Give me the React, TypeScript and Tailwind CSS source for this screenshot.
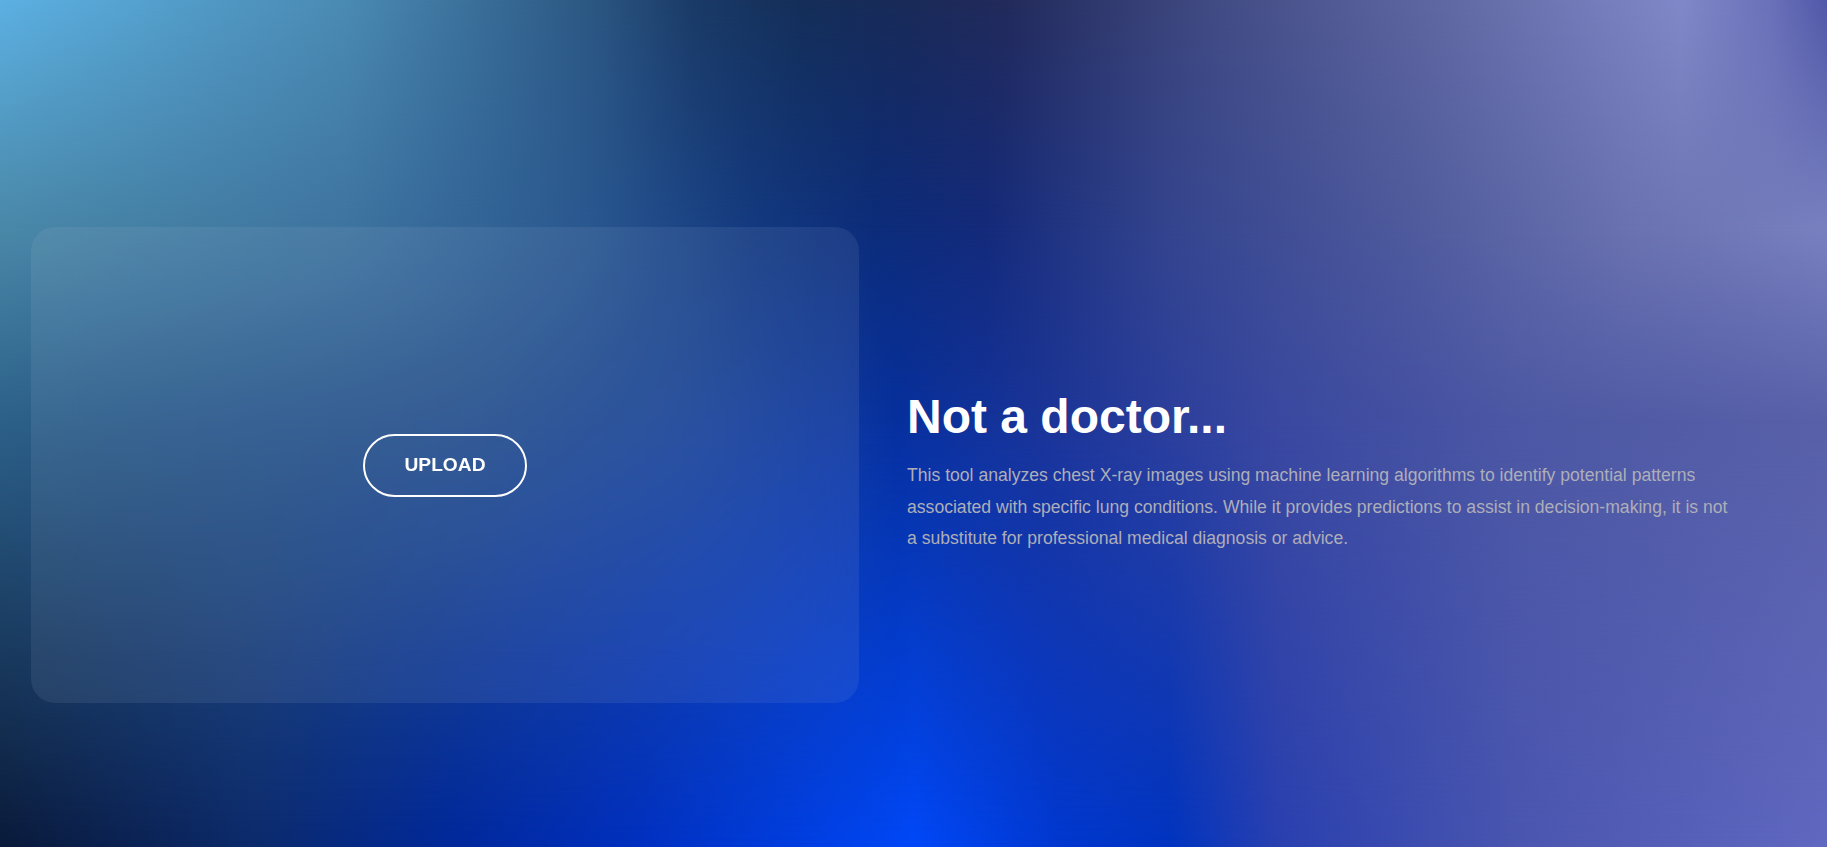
import React from "react";

export default function App() {
  return (
    <div className="relative h-[847px] w-full overflow-hidden font-['Liberation_Sans',Arial,sans-serif] bg-[linear-gradient(to_right,#0a1a3a_0%,#0c2a6c_14%,#00289c_25%,#0030c0_35%,#0048f8_50%,#0038d0_58%,#0034c0_64%,#2a40b0_70%,#4a56b0_83%,#6068c0_100%)]">
      <div className="absolute inset-0 bg-[linear-gradient(to_right,#2c6088_0%,#2a5a8a_6%,#26508c_25%,#1a4498_38%,#0e38a0_46%,#06309e_49%,#1a3498_57%,#3a48a0_70%,#4c58a4_83%,#5860a8_100%)] [mask-image:linear-gradient(to_bottom,black_50%,transparent_100%)]" />
      <div className="absolute inset-0 bg-[linear-gradient(to_right,#4a88a8_0%,#3e74a0_19%,#2a5890_32%,#143a80_41%,#0c2c7a_48%,#142a7a_54%,#34448e_64%,#4e5a9c_77%,#6a72b0_89%,#7880c0_100%)] [mask-image:linear-gradient(to_bottom,black_27%,transparent_50%)]" />
      <div className="absolute inset-0 bg-[linear-gradient(to_right,#5cb0e2_0%,#4a8ab2_19%,#2a5480_33%,#1a3a66_38%,#142e58_44%,#1a2a58_50%,#222a5a_55%,#404a82_66%,#6068a2_79%,#8088c8_92%,#6a70b8_97%,#5058a8_100%)] [mask-image:linear-gradient(to_bottom,black_0%,transparent_27%)]" />

      <div className="relative flex h-full flex-col">
        <div className="h-[83px] shrink-0" />
        <div className="flex flex-1 items-center gap-[48px] px-[31px]">
          <div className="flex h-[476px] w-[828px] shrink-0 items-center justify-center rounded-3xl bg-white/[0.07] backdrop-blur-xl">
            <button className="flex h-[63px] w-[164px] items-center justify-center rounded-full border-2 border-white text-[19.2px] font-bold text-white">
              UPLOAD
            </button>
          </div>
          <div className="flex w-[826px] flex-col pt-[14px]">
            <h1 className="mb-4 text-[48px] font-bold leading-[1.15] text-white">Not a doctor...</h1>
            <p className="text-[17.6px] leading-[1.8] text-[#aeaeb8]">
              This tool analyzes chest X-ray images using machine learning algorithms to identify potential patterns
              associated with specific lung conditions. While it provides predictions to assist in decision-making, it is not
              a substitute for professional medical diagnosis or advice.
            </p>
          </div>
        </div>
      </div>
    </div>
  );
}
